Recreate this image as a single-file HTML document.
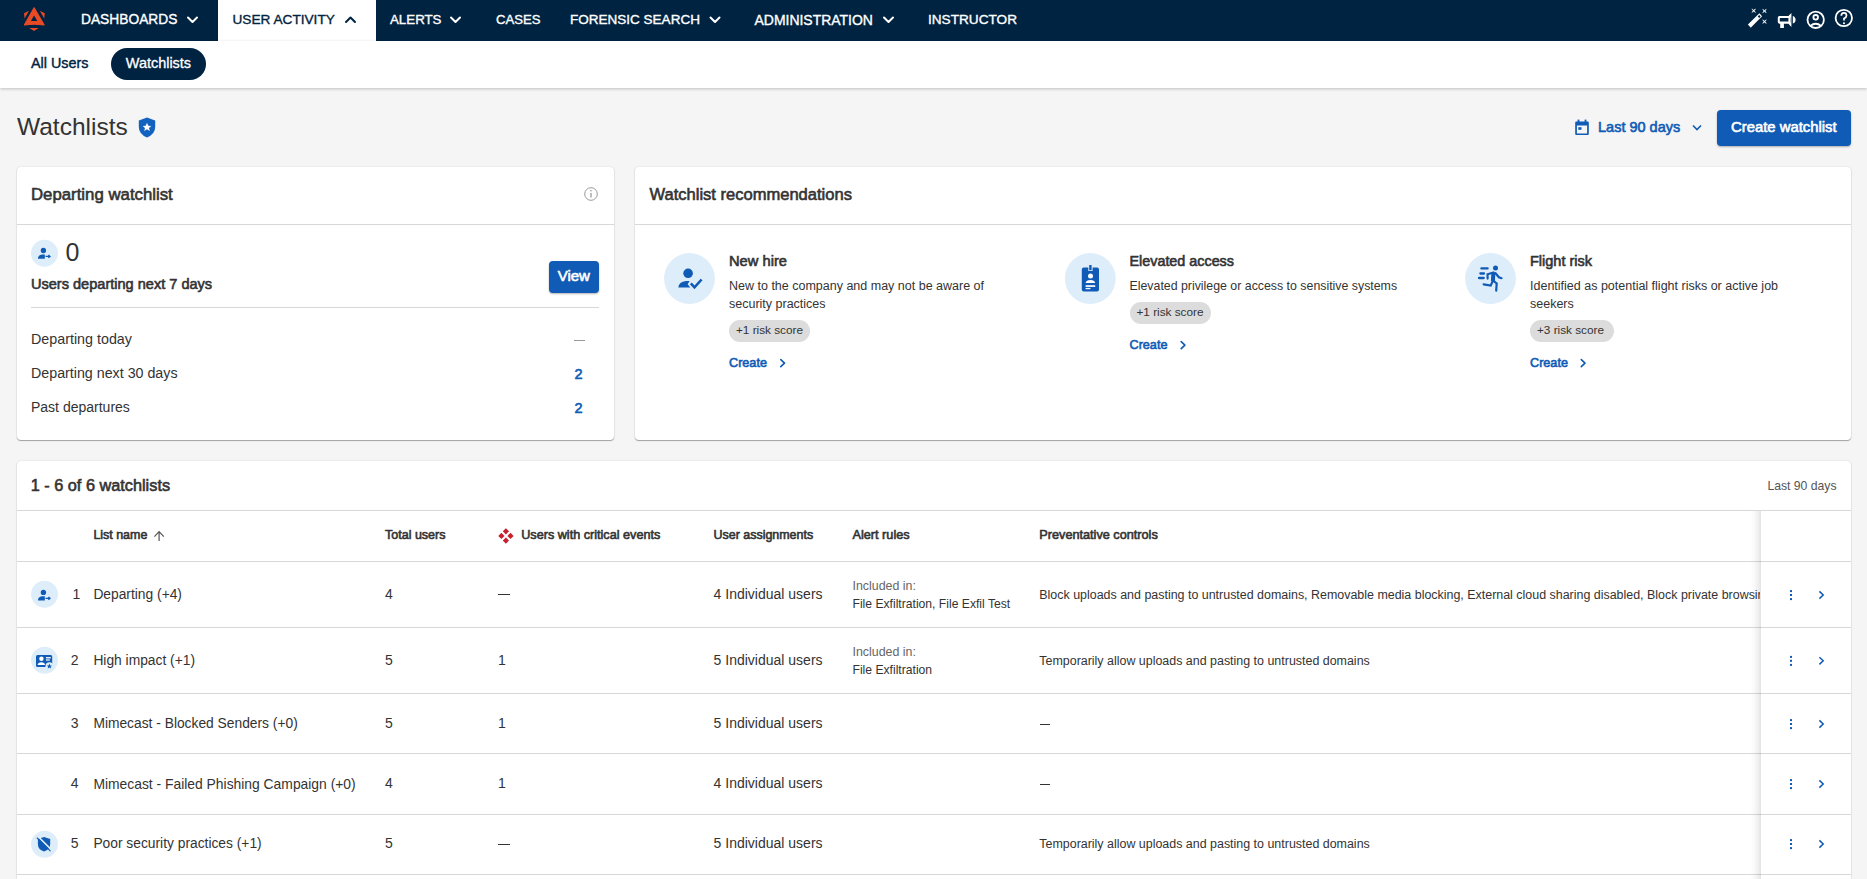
<!DOCTYPE html>
<html><head><meta charset="utf-8">
<style>
html,body{margin:0;padding:0;}
body{width:1867px;height:879px;overflow:hidden;background:#f5f5f5;position:relative;font-family:"Liberation Sans",sans-serif;color:#333;}
.a{position:absolute;}
.t{position:absolute;white-space:nowrap;line-height:20px;}
.b{-webkit-text-stroke:0.6px currentColor;}
#nav{left:0;top:0;width:1867px;height:41px;background:#002341;}
#nav .t{color:#fff;font-size:13.7px;top:10px;-webkit-text-stroke:0.35px currentColor;}
#acttab{left:218px;top:0;width:158px;height:41px;background:#fff;}
#sub{left:0;top:41px;width:1867px;height:47px;background:#fff;box-shadow:0 1px 3px rgba(0,0,0,.22);}
.card{position:absolute;background:#fff;border-radius:4px;box-shadow:0 1px 1px rgba(0,0,0,.32),0 0 2px rgba(0,0,0,.14);}
.hr{position:absolute;height:1px;background:#d8d8d8;}
.circ{position:absolute;border-radius:50%;background:#e1eefa;}
.blue{color:#0f5bb5;}
</style></head>
<body>
<div id="nav" class="a">
  <svg class="a" style="left:0;top:0" width="60" height="41" viewBox="0 0 60 41">
    <path fill="#e94a26" stroke="#e94a26" stroke-width="1.2" stroke-linejoin="round" d="M34.1 7.8 L44 24.9 Q34.1 23.4 24.5 24.9 Z"/><path fill="#002341" d="M34.1 15.4 L37.3 21.1 L30.9 21.1 Z"/>
    <path fill="#e94a26" d="M24 13.2 L29 10.8 L24.6 18.5 Z M44.8 13.2 L39.8 10.8 L44.2 18.5 Z M29.3 27.9 L38.7 27.9 L34 31 Z"/>
  </svg>
  <div id="acttab" class="a"></div>
  <div class="t" style="left:81px;font-size:13.78px">DASHBOARDS</div>
  <div class="t" style="left:232.5px;color:#002341;font-size:13.65px">USER ACTIVITY</div>
  <div class="t" style="left:390px;font-size:13.3px">ALERTS</div>
  <div class="t" style="left:496px;font-size:13.12px">CASES</div>
  <div class="t" style="left:570px;font-size:13.52px">FORENSIC SEARCH</div>
  <div class="t" style="left:754.5px;font-size:13.96px">ADMINISTRATION</div>
  <div class="t" style="left:928px;font-size:13.62px">INSTRUCTOR</div>
  <svg class="a" style="left:0;top:0" width="1867" height="41" viewBox="0 0 1867 41" fill="none" stroke-width="2" stroke-linecap="round" stroke-linejoin="round">
    <path stroke="#fff" d="M188 17.5 L192.5 22 L197 17.5"/>
    <path stroke="#002341" d="M346 22 L350.5 17.5 L355 22"/>
    <path stroke="#fff" d="M451 17.5 L455.5 22 L460 17.5"/>
    <path stroke="#fff" d="M710.5 17.5 L715 22 L719.5 17.5"/>
    <path stroke="#fff" d="M884 17.5 L888.5 22 L893 17.5"/>
  </svg>
  <!-- right icons -->
  <svg class="a" style="left:1740px;top:0" width="127" height="41" viewBox="1740 0 127 41" fill="none" stroke="#fff" stroke-width="1.8">
    <!-- wand -->
    <path fill="#fff" stroke="none" fill-rule="evenodd" d="M1747.9 24.5 L1759.4 13.2 L1762.1 16.3 L1750.7 27.7 Z M1759.2 15 L1760.7 16.5 L1759.2 18 L1757.7 16.5 Z"/>
    <path fill="#fff" stroke="#fff" stroke-width="0.5" d="M1751.90 8.90 L1753.70 10.15 L1755.50 8.90 L1754.25 10.70 L1755.50 12.50 L1753.70 11.25 L1751.90 12.50 L1753.15 10.70 Z M1762.70 9.20 L1764.50 10.45 L1766.30 9.20 L1765.05 11.00 L1766.30 12.80 L1764.50 11.55 L1762.70 12.80 L1763.95 11.00 Z M1762.70 19.80 L1764.50 21.05 L1766.30 19.80 L1765.05 21.60 L1766.30 23.40 L1764.50 22.15 L1762.70 23.40 L1763.95 21.60 Z"/>
    <!-- megaphone -->
    <path fill="#fff" stroke="none" fill-rule="evenodd" d="M1779.5 15.9 L1788.4 15.9 L1791.4 13 L1791.4 26.9 L1788.4 23.8 L1783.9 23.8 L1783.9 27.9 L1780.2 27.9 L1780.2 23.8 Q1777.8 23.8 1777.8 22 L1777.8 17.6 Q1777.8 15.9 1779.5 15.9 Z M1779.8 18 L1779.8 21.6 L1788.4 21.6 L1788.4 18 Z M1790 17.5 L1790 22.5 L1790.3 22.5 L1790.3 17.5 Z"/>
    <path fill="#fff" stroke="none" d="M1792.8 15.9 Q1795.6 16.8 1795.6 19.7 Q1795.6 22.6 1792.8 23.5 Z"/>
    <!-- user circle -->
    <circle cx="1815.7" cy="19.8" r="8.2"/>
    <circle cx="1815.7" cy="17.3" r="2.3"/>
    <path d="M1810.3 26 Q1815.7 21.5 1821.1 26"/>
    <!-- help -->
    <circle cx="1843.8" cy="18" r="8.2"/>
    <path stroke-width="1.7" d="M1841.3 15.8 Q1841.3 12.8 1843.9 12.8 Q1846.5 12.8 1846.5 15.4 Q1846.5 17.2 1844 18.6 L1844 20.6"/>
    <circle cx="1844" cy="23.2" r="1.05" fill="#fff" stroke="none"/>
  </svg>
</div>

<div id="sub" class="a">
  <div class="t" style="left:31px;top:11.5px;font-size:14.35px;color:#002341;-webkit-text-stroke:0.4px currentColor">All Users</div>
  <div class="a" style="left:111px;top:7px;width:95px;height:32px;border-radius:16px;background:#002341"></div>
  <div class="t" style="left:125.8px;top:11.5px;font-size:14.45px;color:#fff;-webkit-text-stroke:0.3px currentColor">Watchlists</div>
</div>

<!-- title row -->
<div class="t" style="left:17px;top:114px;line-height:26px;font-size:24.5px;color:#333">Watchlists</div>
<svg class="a" style="left:138px;top:117px" width="18" height="21" viewBox="0 0 18 21">
  <path fill="#1362c0" d="M9 0.5 L17.2 3.5 L17.2 10 Q17.2 17 9 20.5 Q0.8 17 0.8 10 L0.8 3.5 Z"/>
  <path fill="#fff" d="M9 5.8 L10.3 8.7 L13.3 8.9 L11 10.9 L11.8 13.9 L9 12.3 L6.2 13.9 L7 10.9 L4.7 8.9 L7.7 8.7 Z"/>
</svg>

<svg class="a" style="left:1575px;top:119px" width="14" height="17" viewBox="0 0 14 17">
  <path fill="#0f5bb5" fill-rule="evenodd" d="M1.3 2.4 H12.7 Q13.8 2.4 13.8 3.5 V15 Q13.8 16.1 12.7 16.1 H1.3 Q0.2 16.1 0.2 15 V3.5 Q0.2 2.4 1.3 2.4 Z M1.9 6.4 V14.4 H12.1 V6.4 Z"/>
  <rect x="2.6" y="0.6" width="1.8" height="2.4" fill="#0f5bb5"/><rect x="9.6" y="0.6" width="1.8" height="2.4" fill="#0f5bb5"/>
  <rect x="3.3" y="8.2" width="3.2" height="2.6" fill="#0f5bb5"/>
</svg>
<div class="t b blue" style="left:1598px;top:117px;font-size:14.5px">Last 90 days</div>
<svg class="a" style="left:1690px;top:122px" width="14" height="12" viewBox="0 0 14 12"><path d="M3 3.5 L7 7.5 L11 3.5" fill="none" stroke="#0f5bb5" stroke-width="1.6"/></svg>
<div class="a" style="left:1717px;top:110px;width:134px;height:36px;border-radius:4px;background:#0f5bb5;box-shadow:0 1px 2px rgba(0,0,0,.3)"></div>
<div class="t b" style="left:1731px;top:117px;font-size:14.85px;color:#fff">Create watchlist</div>

<!-- departing card -->
<div class="card" style="left:17px;top:167px;width:597px;height:273px"></div>
<div class="t b" style="left:31px;top:185px;font-size:16.8px">Departing watchlist</div>
<svg class="a" style="left:583px;top:186px" width="16" height="16" viewBox="0 0 16 16" fill="none" stroke="#9a9a9a" stroke-width="1">
  <circle cx="8" cy="8" r="6.3"/><path d="M8 7 V11.5" stroke-width="1.3"/><circle cx="8" cy="4.8" r="0.8" fill="#9a9a9a" stroke="none"/>
</svg>
<div class="hr" style="left:17px;top:224px;width:597px"></div>

<div class="t" style="left:65.5px;top:238px;line-height:28px;font-size:25px">0</div>
<div class="t b" style="left:31px;top:274px;font-size:14.55px">Users departing next 7 days</div>
<div class="a" style="left:549px;top:261px;width:50px;height:32px;border-radius:4px;background:#0f5bb5;box-shadow:0 1px 2px rgba(0,0,0,.3)"></div>
<div class="t b" style="left:557.7px;top:266px;font-size:15px;color:#fff">View</div>
<div class="hr" style="left:31px;top:307px;width:568px"></div>
<div class="t" style="left:31px;top:329px;font-size:14.3px">Departing today</div>
<div class="a" style="left:573.5px;top:340px;width:11.5px;height:1px;background:#999"></div>
<div class="t" style="left:31px;top:363px;font-size:14.25px">Departing next 30 days</div>
<div class="t b blue" style="left:574.5px;top:364px;font-size:14.5px">2</div>
<div class="t" style="left:31px;top:397px;font-size:14px">Past departures</div>
<div class="t b blue" style="left:574.5px;top:398px;font-size:14.5px">2</div>

<!-- recommendations card -->
<div class="card" style="left:635px;top:167px;width:1216px;height:273px"></div>
<div class="t b" style="left:649.5px;top:185px;font-size:16.55px">Watchlist recommendations</div>
<div class="hr" style="left:635px;top:224px;width:1216px"></div>

<div class="t b" style="left:729px;top:251px;font-size:14.7px">New hire</div>
<div class="t" style="left:729px;top:277px;line-height:18px;font-size:12.5px;white-space:normal;width:270px">New to the company and may not be aware of security practices</div>
<div class="a" style="left:729px;top:320px;width:81px;height:22px;border-radius:11px;background:#dcdcdc"></div>
<div class="t" style="left:736px;top:320px;font-size:11.75px">+1 risk score</div>
<div class="t b blue" style="left:729px;top:353px;font-size:12.65px">Create</div>

<div class="t b" style="left:1129.5px;top:251px;font-size:14.35px">Elevated access</div>
<div class="t" style="left:1129.5px;top:276px;font-size:12.35px">Elevated privilege or access to sensitive systems</div>
<div class="a" style="left:1129.5px;top:302px;width:81px;height:22px;border-radius:11px;background:#dcdcdc"></div>
<div class="t" style="left:1136.5px;top:302px;font-size:11.75px">+1 risk score</div>
<div class="t b blue" style="left:1129.5px;top:335px;font-size:12.65px">Create</div>

<div class="t b" style="left:1530px;top:251px;font-size:14.5px">Flight risk</div>
<div class="t" style="left:1530px;top:277px;line-height:18px;font-size:12.5px;white-space:normal;width:260px">Identified as potential flight risks or active job seekers</div>
<div class="a" style="left:1530px;top:320px;width:84px;height:22px;border-radius:11px;background:#dcdcdc"></div>
<div class="t" style="left:1537px;top:320px;font-size:11.75px">+3 risk score</div>
<div class="t b blue" style="left:1530px;top:353px;font-size:12.65px">Create</div>

<svg class="a" style="left:0;top:0" width="1867" height="879" viewBox="0 0 1867 879" fill="none" stroke="#0f5bb5" stroke-width="1.6" stroke-linecap="round" stroke-linejoin="round">
  <path d="M780.8 359.6 L784.5 363.1 L780.8 366.6"/>
  <path d="M1181.2 341.6 L1184.9 345.1 L1181.2 348.6"/>
  <path d="M1581.3 359.6 L1585 363.1 L1581.3 366.6"/>
</svg>

<!-- table card -->
<div class="card" style="left:17px;top:461px;width:1834px;height:440px"></div>
<div class="t b" style="left:30.7px;top:474.5px;font-size:16.3px">1 - 6 of 6 watchlists</div>
<div class="t" style="left:1767.4px;top:476px;font-size:12.2px;color:#555">Last 90 days</div>
<div class="hr" style="left:17px;top:510px;width:1834px"></div>
<div class="t b" style="left:93.4px;top:525px;font-size:12.45px">List name</div>
<div class="t b" style="left:385px;top:525px;font-size:12.5px">Total users</div>
<div class="t b" style="left:521.2px;top:525px;font-size:12.65px">Users with critical events</div>
<div class="t b" style="left:713.6px;top:525px;font-size:12.45px">User assignments</div>
<div class="t b" style="left:852.5px;top:525px;font-size:12.7px">Alert rules</div>
<div class="t b" style="left:1039.3px;top:525px;font-size:12.7px">Preventative controls</div>
<div class="hr" style="left:17px;top:561px;width:1834px"></div>

<!-- rows -->
<div class="t" style="left:72.4px;top:584px;font-size:14px">1</div>
<div class="t" style="left:93.4px;top:585px;font-size:13.8px">Departing (+4)</div>
<div class="t" style="left:385px;top:584px;font-size:14px">4</div>
<div class="a" style="left:498px;top:594px;width:12px;height:1px;background:#333"></div>
<div class="t" style="left:713.6px;top:584px;font-size:14px">4 Individual users</div>
<div class="t" style="left:852.5px;top:576px;font-size:12.4px;color:#666">Included in:</div>
<div class="t" style="left:852.5px;top:594px;font-size:12.15px">File Exfiltration, File Exfil Test</div>
<div class="a" style="left:1039.3px;top:585px;width:721px;overflow:hidden"><div class="t" style="position:relative;font-size:12.45px">Block uploads and pasting to untrusted domains, Removable media blocking, External cloud sharing disabled, Block private browsing</div></div>
<div class="hr" style="left:17px;top:627px;width:1834px"></div>

<div class="t" style="left:70.7px;top:650px;font-size:14px">2</div>
<div class="t" style="left:93.4px;top:651px;font-size:13.8px">High impact (+1)</div>
<div class="t" style="left:385px;top:650px;font-size:14px">5</div>
<div class="t" style="left:498px;top:650px;font-size:14px">1</div>
<div class="t" style="left:713.6px;top:650px;font-size:14px">5 Individual users</div>
<div class="t" style="left:852.5px;top:642px;font-size:12.4px;color:#666">Included in:</div>
<div class="t" style="left:852.5px;top:660px;font-size:12.15px">File Exfiltration</div>
<div class="t" style="left:1039.3px;top:651px;font-size:12.45px">Temporarily allow uploads and pasting to untrusted domains</div>
<div class="hr" style="left:17px;top:693px;width:1834px"></div>

<div class="t" style="left:70.7px;top:713px;font-size:14px">3</div>
<div class="t" style="left:93.4px;top:714px;font-size:13.8px">Mimecast - Blocked Senders (+0)</div>
<div class="t" style="left:385px;top:713px;font-size:14px">5</div>
<div class="t" style="left:498px;top:713px;font-size:14px">1</div>
<div class="t" style="left:713.6px;top:713px;font-size:14px">5 Individual users</div>
<div class="a" style="left:1039.5px;top:724px;width:10px;height:1px;background:#333"></div>
<div class="hr" style="left:17px;top:753px;width:1834px"></div>

<div class="t" style="left:70.7px;top:773px;font-size:14px">4</div>
<div class="t" style="left:93.4px;top:774px;font-size:13.86px">Mimecast - Failed Phishing Campaign (+0)</div>
<div class="t" style="left:385px;top:773px;font-size:14px">4</div>
<div class="t" style="left:498px;top:773px;font-size:14px">1</div>
<div class="t" style="left:713.6px;top:773px;font-size:14px">4 Individual users</div>
<div class="a" style="left:1039.5px;top:784px;width:10px;height:1px;background:#333"></div>
<div class="hr" style="left:17px;top:814px;width:1834px"></div>

<div class="t" style="left:70.7px;top:833px;font-size:14px">5</div>
<div class="t" style="left:93.4px;top:834px;font-size:13.8px">Poor security practices (+1)</div>
<div class="t" style="left:385px;top:833px;font-size:14px">5</div>
<div class="a" style="left:498px;top:844px;width:12px;height:1px;background:#333"></div>
<div class="t" style="left:713.6px;top:833px;font-size:14px">5 Individual users</div>
<div class="t" style="left:1039.3px;top:834px;font-size:12.45px">Temporarily allow uploads and pasting to untrusted domains</div>
<div class="hr" style="left:17px;top:874px;width:1834px"></div>

<!-- sticky column -->
<div class="a" style="left:1750px;top:511px;width:11px;height:368px;background:linear-gradient(to right,rgba(0,0,0,0),rgba(0,0,0,.025) 40%,rgba(0,0,0,.07) 80%,rgba(0,0,0,.11))"></div>
<div class="a" style="left:1761px;top:511px;width:90px;height:368px;background:#fff"></div>
<div class="hr" style="left:1761px;top:561px;width:90px"></div>
<div class="hr" style="left:1761px;top:627px;width:90px"></div>
<div class="hr" style="left:1761px;top:693px;width:90px"></div>
<div class="hr" style="left:1761px;top:753px;width:90px"></div>
<div class="hr" style="left:1761px;top:814px;width:90px"></div>
<div class="hr" style="left:1761px;top:874px;width:90px"></div>


<!-- ICON OVERLAY -->
<svg class="a" style="left:0;top:0" width="1867" height="879" viewBox="0 0 1867 879">
  <defs>
    <g id="idep">
      <circle cx="0" cy="0" r="13.45" fill="#deedfa"/>
      <use href="#idepg"/>
    </g>
    <g id="idepg">
      <circle cx="-1.1" cy="-1.9" r="2.65" fill="#0f5bb5"/>
      <path fill="#0f5bb5" d="M-6.6 6.3 Q-6.4 2.4 -2.5 2 L0.3 2 L0.3 6.3 Z"/>
      <path d="M1 4 H5.3 M3.9 2.6 L5.5 4 L3.9 5.5" stroke="#0f5bb5" stroke-width="1.3" fill="none"/>
    </g>
  </defs>
  <circle cx="44.5" cy="253.3" r="13.45" fill="#deedfa"/><use href="#idepg" x="44.5" y="252.4"/>
  <use href="#idep" x="44.5" y="594.3"/>
  <!-- row2 high impact -->
  <circle cx="44.5" cy="660.3" r="13.45" fill="#deedfa"/>
  <path fill="#0f5bb5" fill-rule="evenodd" d="M37.5 654.9 H50.7 Q52.2 654.9 52.2 656.4 V665.5 Q52.2 667 50.7 667 H37.5 Q36 667 36 665.5 V656.4 Q36 654.9 37.5 654.9 Z"/>
  <circle cx="41.4" cy="658.8" r="2.2" fill="#fff"/>
  <path fill="#fff" d="M37.6 665 Q38 662.3 41.3 662.3 Q44.6 662.3 45.1 665 Z"/>
  <rect x="45.9" y="657.1" width="4.9" height="1.3" fill="#fff"/>
  <rect x="45.9" y="659.4" width="3.9" height="1.2" fill="#fff"/>
  <circle cx="49.4" cy="666.2" r="3.9" fill="#deedfa"/>
  <path fill="#0f5bb5" d="M49.4 663.6 L50.2 665.4 L52 665.5 L50.6 666.7 L51.1 668.6 L49.4 667.6 L47.7 668.6 L48.2 666.7 L46.8 665.5 L48.6 665.4 Z"/>
  <!-- row5 shield off -->
  <circle cx="44.5" cy="844.3" r="13.45" fill="#deedfa"/>
  <path fill="#0f5bb5" d="M44 836.9 L50.2 839 L50.2 844 Q50.2 849.5 44 851.6 Q37.9 849.5 37.9 844 L37.9 839 Z"/>
  <path d="M38.2 836.6 L51.2 849.6" stroke="#deedfa" stroke-width="1.5"/>
  <path d="M37.2 838 L50.2 850.9" stroke="#0f5bb5" stroke-width="1.1" stroke-linecap="round"/>

  <!-- rec: new hire -->
  <circle cx="689.5" cy="278.5" r="25.4" fill="#deedfa"/>
  <circle cx="688.1" cy="273.3" r="4.8" fill="#0f5bb5"/>
  <path fill="#0f5bb5" d="M678.3 287.6 Q678.8 281.6 686 281 L689.6 281 L687.7 284.3 L690.3 287.6 Z"/>
  <path d="M690.8 283.3 L694.5 287.4 L701.6 279.5" stroke="#0f5bb5" stroke-width="2.6" fill="none"/>
  <!-- rec: elevated -->
  <circle cx="1090.3" cy="278.5" r="25.4" fill="#deedfa"/>
  <path fill="#0f5bb5" d="M1083.8 267.4 H1088.3 V271 H1092.6 V267.4 H1097 Q1099 267.4 1099 269.4 V289.6 Q1099 291.6 1097 291.6 H1083.8 Q1081.8 291.6 1081.8 289.6 V269.4 Q1081.8 267.4 1083.8 267.4 Z"/>
  <rect x="1089.2" y="265" width="2.4" height="5.2" fill="#0f5bb5"/>
  <circle cx="1090.5" cy="275.9" r="2.5" fill="#fff"/>
  <path fill="#fff" d="M1085.6 283.1 Q1086.2 279.9 1090.4 279.9 Q1094.6 279.9 1095.2 283.1 Z"/>
  <rect x="1085.6" y="285.2" width="9.6" height="1.7" fill="#fff"/>
  <rect x="1085.6" y="287.9" width="4.8" height="1.3" fill="#fff"/>
  <!-- rec: flight -->
  <circle cx="1490.5" cy="278.5" r="25.4" fill="#deedfa"/>
  <circle cx="1495.5" cy="268.1" r="2.5" fill="#0f5bb5"/>
  <g stroke="#0f5bb5" stroke-linecap="round" fill="none">
    <path stroke-width="2.3" d="M1481.4 268.4 H1487.6 M1480.4 273.5 H1484 M1479 278 H1483.7"/>
    <path stroke-width="4" stroke-linecap="butt" d="M1493.4 272.5 L1492.9 281.4"/>
    <path stroke-width="2.2" d="M1493.4 272.5 L1487.6 274.2 L1487.6 278.6 M1495.5 273.2 L1498.9 277.3 L1501.6 278.2 M1492.4 281.9 L1490.7 285.5 L1483.6 284.3 M1494.1 281.4 L1496.7 283.4 L1496.2 290.6"/>
  </g>
  <!-- red diamond -->
  <g fill="#c8202f">
    <path d="M505.9 528.2 L509 531.3 L505.9 534.4 L502.8 531.3 Z"/>
    <path d="M501.4 532.8 L504.5 535.9 L501.4 539 L498.3 535.9 Z"/>
    <path d="M510.5 532.8 L513.6 535.9 L510.5 539 L507.4 535.9 Z"/>
    <path d="M505.9 537.5 L509 540.6 L505.9 543.7 L502.8 540.6 Z"/>
  </g>
  <!-- sort arrow -->
  <path d="M159.1 531.6 V541 M154.4 536.6 L159.1 531.6 L163.8 536.6" stroke="#555" stroke-width="1.2" fill="none"/>
  <!-- kebabs + chevrons -->
  <g fill="#0f5bb5">
    <rect x="1790" y="590.1" width="2" height="2"/><rect x="1790" y="594" width="2" height="2"/><rect x="1790" y="598.1" width="2" height="2"/>
    <rect x="1790" y="655.9" width="2" height="2"/><rect x="1790" y="659.8" width="2" height="2"/><rect x="1790" y="663.9" width="2" height="2"/>
    <rect x="1790" y="719.1" width="2" height="2"/><rect x="1790" y="723" width="2" height="2"/><rect x="1790" y="727.1" width="2" height="2"/>
    <rect x="1790" y="779.1" width="2" height="2"/><rect x="1790" y="783" width="2" height="2"/><rect x="1790" y="787.1" width="2" height="2"/>
    <rect x="1790" y="839.1" width="2" height="2"/><rect x="1790" y="843" width="2" height="2"/><rect x="1790" y="847.1" width="2" height="2"/>
  </g>
  <g stroke="#0f5bb5" stroke-width="1.5" fill="none">
    <path d="M1819.4 591.4 L1823.2 595 L1819.4 598.6"/>
    <path d="M1819.4 657.2 L1823.2 660.8 L1819.4 664.4"/>
    <path d="M1819.4 720.4 L1823.2 724 L1819.4 727.6"/>
    <path d="M1819.4 780.4 L1823.2 784 L1819.4 787.6"/>
    <path d="M1819.4 840.4 L1823.2 844 L1819.4 847.6"/>
  </g>
</svg>
</body></html>
